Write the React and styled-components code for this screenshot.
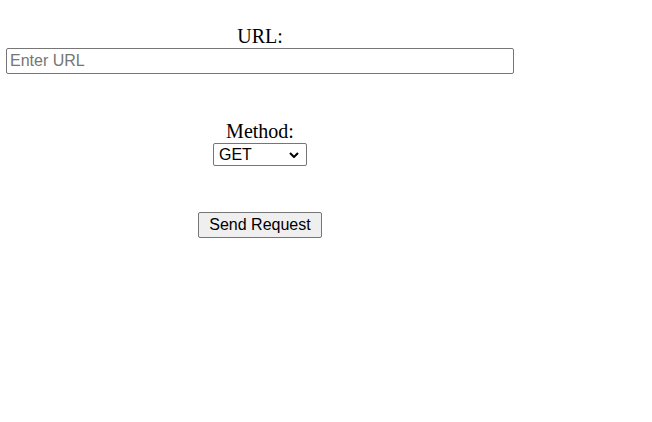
import styled, { createGlobalStyle } from "styled-components";

const GlobalStyle = createGlobalStyle`
  body {
    margin: 0;
    background: #fff;
    font-family: "Liberation Serif", "Times New Roman", serif;
  }
`;

export default function App() {
  return (
    <>
      <GlobalStyle />
      <Form onSubmit={(e) => e.preventDefault()}>
        <Field>
          <Label htmlFor="url">URL:</Label>
          <UrlInput id="url" type="text" placeholder="Enter URL" />
        </Field>
        <Field>
          <Label htmlFor="method">Method:</Label>
          <SelectWrap>
            <MethodSelect id="method" defaultValue="GET">
              <option>GET</option>
              <option>POST</option>
              <option>PUT</option>
              <option>DELETE</option>
            </MethodSelect>
            <Chevron viewBox="0 0 10 6" aria-hidden="true">
              <path d="M1 1l4 4 4-4" fill="none" stroke="#000" strokeWidth="2" />
            </Chevron>
          </SelectWrap>
        </Field>
        <Field>
          <SendButton type="submit">Send Request</SendButton>
        </Field>
      </Form>
    </>
  );
}

const Form = styled.form`
  display: flex;
  flex-direction: column;
  gap: 46px;
  width: 508px;
  margin-left: 6px;
  padding-top: 25px;
`;

const Field = styled.div`
  display: flex;
  flex-direction: column;
  align-items: center;
`;

const Label = styled.label`
  display: block;
  font-size: 20px;
  line-height: 23px;
  color: #000;
`;

const UrlInput = styled.input`
  box-sizing: border-box;
  width: 100%;
  height: 26px;
  padding: 1px 3px;
  font-family: "Liberation Sans", Arial, sans-serif;
  font-size: 16px;
  border: 1px solid #767676;
  border-radius: 2px;
  &::placeholder {
    color: #757575;
  }
`;

const SelectWrap = styled.div`
  position: relative;
  width: 94px;
  height: 23px;
`;

const MethodSelect = styled.select`
  box-sizing: border-box;
  appearance: none;
  width: 100%;
  height: 100%;
  padding: 0 20px 0 5px;
  font-family: "Liberation Sans", Arial, sans-serif;
  font-size: 16px;
  color: #000;
  border: 1px solid #767676;
  border-radius: 2px;
  background: #fff;
`;

const Chevron = styled.svg`
  position: absolute;
  right: 8px;
  top: 9px;
  width: 10px;
  height: 6px;
  pointer-events: none;
`;

const SendButton = styled.button`
  box-sizing: border-box;
  height: 26px;
  padding: 2px 10px;
  font-family: "Liberation Sans", Arial, sans-serif;
  font-size: 16px;
  color: #000;
  background: #efefef;
  border: 1px solid #767676;
  border-radius: 2px;
`;
